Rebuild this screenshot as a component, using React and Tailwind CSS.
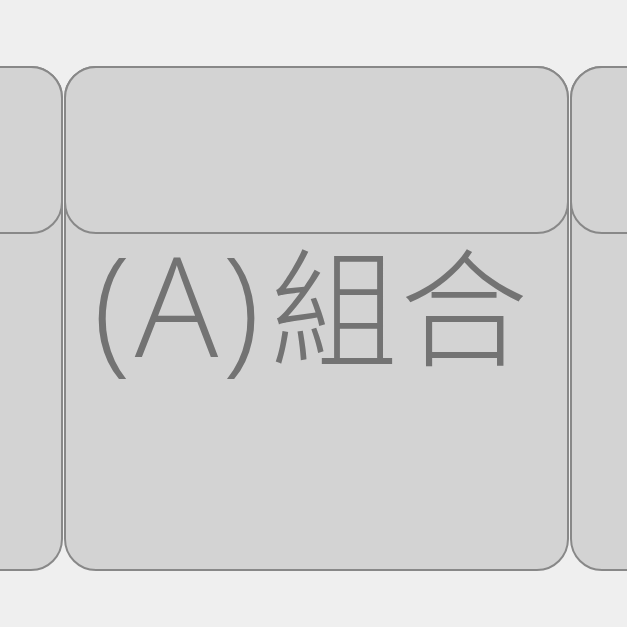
export default function App() {
  const Key = ({ children }) => (
    <div className="w-[505px] h-[505px] shrink-0 rounded-[32px] border-2 border-[#888888] bg-[#d3d3d3] flex flex-col">
      <div className="-mx-[2px] -mt-[2px] h-[168px] shrink-0 rounded-[32px] border-2 border-[#888888] bg-[#d3d3d3]" />
      {children}
    </div>
  );
  return (
    <div className="w-[627px] h-[627px] overflow-hidden bg-[#efefef]">
      <div className="flex gap-[1px] -ml-[442px] mt-[66px]">
        <Key />
        <Key>
          <div className="flex items-baseline pl-[27px] -mt-[2px] h-[140px] text-[#737373] font-light whitespace-nowrap">
            <span
              className="text-[139px] leading-[140px] tracking-[4px]"
              style={{ fontFamily: '"Open Sans", "Noto Sans", sans-serif' }}
            >
              (A)
            </span>
            <span
              className="ml-[6px] text-[128px] leading-[140px] tracking-[2px]"
              style={{ fontFamily: '"Noto Sans CJK TC", sans-serif' }}
            >
              組合
            </span>
          </div>
        </Key>
        <Key />
      </div>
    </div>
  );
}
